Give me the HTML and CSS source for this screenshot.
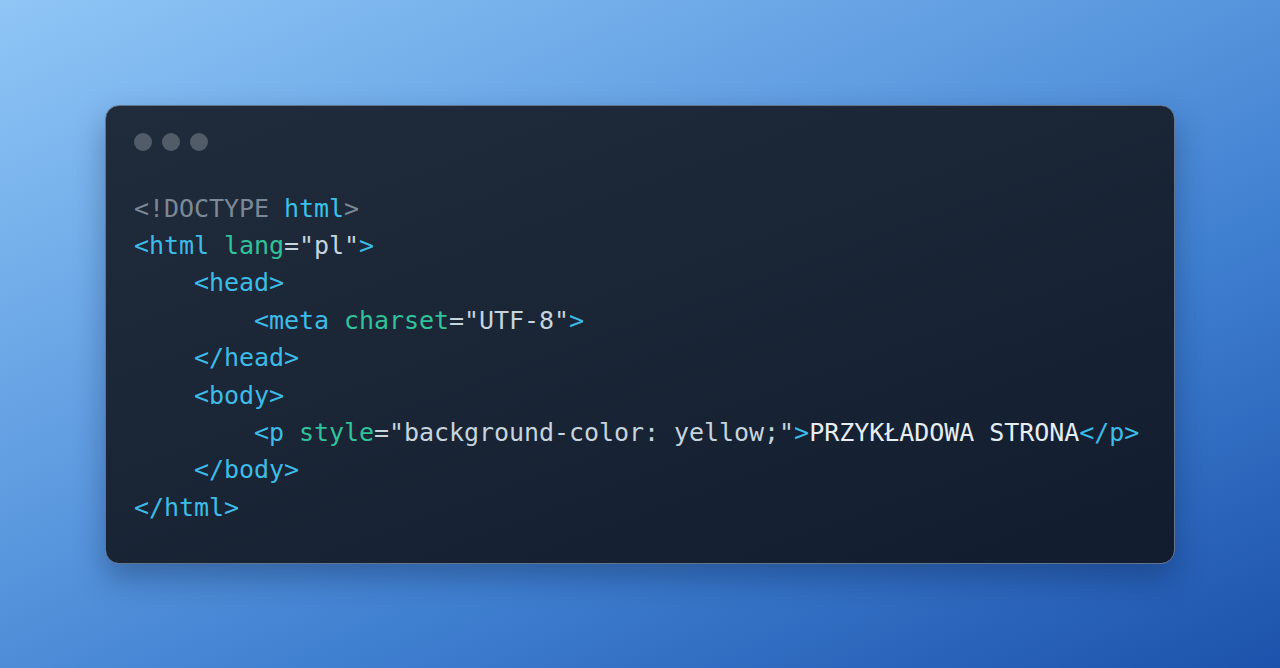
FILE: index.html
```html
<!DOCTYPE html>
<html lang="pl">
<head>
<meta charset="UTF-8">
<link rel="stylesheet" href="styles.css">
</head>
<body>
<main class="stage">
  <section class="window">
    <div class="dots"><span class="dot"></span><span class="dot"></span><span class="dot"></span></div>
    <pre class="code"><span class="dt">&lt;!DOCTYPE</span> <span class="kw">html</span><span class="dt">&gt;</span>
<span class="tg">&lt;html</span> <span class="at">lang</span><span class="st">="pl"</span><span class="tg">&gt;</span>
    <span class="tg">&lt;head&gt;</span>
        <span class="tg">&lt;meta</span> <span class="at">charset</span><span class="st">="UTF-8"</span><span class="tg">&gt;</span>
    <span class="tg">&lt;/head&gt;</span>
    <span class="tg">&lt;body&gt;</span>
        <span class="tg">&lt;p</span> <span class="at">style</span><span class="st">="background-color: yellow;"</span><span class="tg">&gt;</span><span class="tx">PRZYKŁADOWA STRONA</span><span class="tg">&lt;/p&gt;</span>
    <span class="tg">&lt;/body&gt;</span>
<span class="tg">&lt;/html&gt;</span></pre>
  </section>
</main>
</body>
</html>
```

FILE: styles.css
```css
html, body {
  margin: 0;
  padding: 0;
  height: 100%;
}
body {
  background: linear-gradient(155deg, #8fc6f6 0%, #6aa6e6 30%, #3f7fd0 65%, #1c52ab 100%);
  overflow: hidden;
}
.stage {
  height: 668px;
  display: flex;
  align-items: center;
  justify-content: center;
}
.window {
  box-sizing: border-box;
  width: 1070px;
  height: 459px;
  border: 1px solid #63758c;
  border-radius: 14px;
  background: linear-gradient(160deg, #202c3c 0%, #1a2536 45%, #111c2e 100%);
  box-shadow: 0 14px 30px rgba(10, 30, 70, 0.35);
  padding: 27px 28px 0 28px;
}
.dots {
  display: flex;
  gap: 10px;
}
.dot {
  width: 18px;
  height: 18px;
  border-radius: 50%;
  background: #525c69;
}
.code {
  margin: 39px 0 0 0;
  font-family: "DejaVu Sans Mono", "Liberation Mono", monospace;
  font-size: 25px;
  line-height: 37.4px;
  color: #c8d5e0;
  letter-spacing: -0.05px;
}
.dt { color: #7c8896; }
.kw { color: #3cc0e8; }
.tg { color: #3cbce6; }
.at { color: #30c29a; }
.st { color: #c6d4de; }
.tx { color: #e6edf3; }
```
